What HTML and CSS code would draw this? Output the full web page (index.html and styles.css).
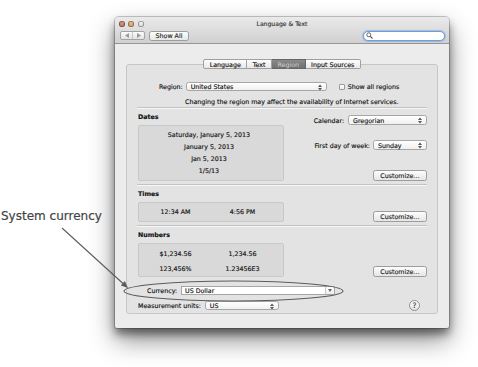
FILE: index.html
```html
<!DOCTYPE html>
<html lang="en">
<head>
  <meta charset="UTF-8" />
  <title>Language &amp; Text</title>
  <link rel="stylesheet" href="styles.css">
</head>
<body>
  <div class="stage">
    <p class="callout-label">System currency</p>
    <svg class="callout" width="478" height="367" viewBox="0 0 478 367">
      <line x1="62" y1="228" x2="123" y2="283.5" stroke="#5c5c5c" stroke-width="1.1"/>
      <polygon points="128,288 120.8,285.5 124.8,281.1" fill="#5c5c5c"/>
      <ellipse cx="233.5" cy="291" rx="109.5" ry="10" fill="none" stroke="#5c5c5c" stroke-width="1.1"/>
    </svg>

    <div class="window">
      <div class="titlebar">
        <div class="title-row">
          <div class="lights">
            <span class="light close"></span>
            <span class="light min"></span>
            <span class="light zoom"></span>
          </div>
          <div class="title">Language &amp; Text</div>
          <div></div>
        </div>
        <div class="toolbar">
          <div class="nav">
            <span class="nav-btn">
              <svg width="4" height="5" viewBox="0 0 4 5"><path d="M4 0L0 2.5L4 5Z" fill="#9a9a9a"/></svg>
            </span>
            <span class="nav-btn">
              <svg width="4" height="5" viewBox="0 0 4 5"><path d="M0 0L4 2.5L0 5Z" fill="#9a9a9a"/></svg>
            </span>
          </div>
          <div class="btn show-all">Show All</div>
          <div class="search">
            <svg width="7" height="7" viewBox="0 0 7 7"><circle cx="2.8" cy="2.8" r="2" fill="none" stroke="#555" stroke-width="0.9"/><path d="M4.3 4.3L6.5 6.5" stroke="#555" stroke-width="1.1"/></svg>
          </div>
        </div>
      </div>

      <div class="content">
        <div class="tabs">
          <span class="tab">Language</span>
          <span class="tab">Text</span>
          <span class="tab selected">Region</span>
          <span class="tab">Input Sources</span>
        </div>

        <div class="group">
          <div class="region-row">
            <span>Region:</span>
            <div class="popup region-popup">United States<svg class="updown" width="4" height="7" viewBox="0 0 4 7"><path d="M0 3L2 0.5L4 3Z M0 4L2 6.5L4 4Z"/></svg></div>
            <span class="checkbox"></span>
            <span>Show all regions</span>
          </div>
          <p class="info">Changing the region may affect the availability of Internet services.</p>
          <div class="separator"></div>

          <div class="section">
            <div class="section-left">
              <div class="section-title">Dates</div>
              <div class="inset dates">
                <div>Saturday, January 5, 2013</div>
                <div>January 5, 2013</div>
                <div>Jan 5, 2013</div>
                <div>1/5/13</div>
              </div>
            </div>
            <div class="section-right">
              <div class="field calendar">
                <span>Calendar:</span>
                <div class="popup cal-popup">Gregorian<svg class="updown" width="4" height="7" viewBox="0 0 4 7"><path d="M0 3L2 0.5L4 3Z M0 4L2 6.5L4 4Z"/></svg></div>
              </div>
              <div class="field first-day">
                <span>First day of week:</span>
                <div class="popup day-popup">Sunday<svg class="updown" width="4" height="7" viewBox="0 0 4 7"><path d="M0 3L2 0.5L4 3Z M0 4L2 6.5L4 4Z"/></svg></div>
              </div>
              <div class="btn customize">Customize…</div>
            </div>
          </div>
          <div class="separator sep-mid"></div>

          <div class="section">
            <div class="section-left">
              <div class="section-title">Times</div>
              <div class="inset pairs times">
                <span>12:34 AM</span><span>4:56 PM</span>
              </div>
            </div>
            <div class="section-right">
              <div class="btn customize">Customize…</div>
            </div>
          </div>
          <div class="separator sep-mid"></div>

          <div class="section numbers-section">
            <div class="section-left">
              <div class="section-title">Numbers</div>
              <div class="inset pairs numbers">
                <span>$1,234.56</span><span>1,234.56</span>
                <span>123,456%</span><span>1.23456E3</span>
              </div>
            </div>
            <div class="section-right">
              <div class="btn customize">Customize…</div>
            </div>
          </div>

          <div class="currency-row">
            <span>Currency:</span>
            <div class="combo">
              <span class="combo-text">US Dollar</span>
              <span class="combo-btn"><svg width="4" height="3" viewBox="0 0 4 3"><path d="M0 0L4 0L2 3Z" fill="#666"/></svg></span>
            </div>
          </div>
          <div class="units-row">
            <span>Measurement units:</span>
            <div class="popup units-popup">US<svg class="updown" width="4" height="7" viewBox="0 0 4 7"><path d="M0 3L2 0.5L4 3Z M0 4L2 6.5L4 4Z"/></svg></div>
            <span class="help">?</span>
          </div>
        </div>
      </div>
    </div>
  </div>
</body>
</html>
```

FILE: styles.css
```css
body {
  margin: 0;
  background: #fff;
  font-family: "DejaVu Sans", Verdana, sans-serif;
  font-size: 6.3px;
  color: #111;
  -webkit-text-stroke: 0.15px currentColor;
}
.stage {
  position: relative;
  width: 478px;
  height: 367px;
  overflow: hidden;
  padding-top: 17px;
  box-sizing: border-box;
}
.callout-label {
  position: absolute;
  left: 1px;
  top: 209px;
  margin: 0;
  font-size: 12px;
  color: #444;
  -webkit-text-stroke: 0.2px currentColor;
}
.callout {
  position: absolute;
  left: 0;
  top: 0;
  z-index: 2;
  pointer-events: none;
}

/* window */
.window {
  margin-left: 115px;
  width: 334px;
  height: 311px;
  background: #ececec;
  border-radius: 4px 4px 2px 2px;
  box-shadow: 0 0 0 1px rgba(0,0,0,.2), 0 6px 8px rgba(0,0,0,.45), 0 12px 26px rgba(0,0,0,.45);
  overflow: hidden;
}
.titlebar {
  height: 26px;
  background: linear-gradient(#eaeaea, #d0d0d0);
  border-bottom: 1px solid #959595;
}
.title-row {
  display: grid;
  grid-template-columns: 1fr auto 1fr;
  align-items: center;
  height: 12px;
}
.lights {
  display: flex;
  gap: 3.5px;
  padding-left: 3.5px;
  padding-top: 1px;
}
.light {
  width: 6px;
  height: 6px;
  border-radius: 50%;
  box-shadow: inset 0 0 0 0.6px rgba(0,0,0,.4);
}
.light.close { background: radial-gradient(circle at 50% 40%, #d99b86, #9c5a46); }
.light.min { background: radial-gradient(circle at 50% 40%, #e8be8c, #b9834a); }
.light.zoom { background: radial-gradient(circle at 50% 40%, #f0f0f0, #c2c2c2); }
.title {
  color: #333;
  font-size: 6.1px;
  padding-top: 1px;
}
.toolbar {
  display: flex;
  align-items: center;
  height: 11px;
  margin-top: 1px;
  padding: 0 4px 0 5px;
}
.nav {
  display: flex;
  width: 25px;
  height: 9px;
  border: 1px solid #a3a3a3;
  border-radius: 2px;
  background: linear-gradient(#fbfbfb, #e2e2e2);
  box-sizing: border-box;
}
.nav-btn {
  flex: 1;
  display: flex;
  align-items: center;
  justify-content: center;
}
.nav-btn + .nav-btn {
  border-left: 1px solid #c4c4c4;
}
.btn {
  display: flex;
  align-items: center;
  justify-content: center;
  border: 1px solid #9d9d9d;
  border-radius: 2.5px;
  background: linear-gradient(#fdfdfd, #e6e6e6);
  box-sizing: border-box;
  color: #222;
}
.show-all {
  margin-left: 4px;
  width: 40px;
  height: 10px;
}
.search {
  margin-left: auto;
  width: 82px;
  height: 10px;
  border: 1px solid #6f9fd6;
  border-radius: 6px;
  background: #fff;
  box-shadow: 0 0 0 1px rgba(120,165,220,.55);
  box-sizing: border-box;
  display: flex;
  align-items: center;
  padding-left: 2px;
}

/* content */
.content {
  padding: 15px 11px 0;
}
.tabs {
  position: relative;
  z-index: 1;
  display: flex;
  justify-content: center;
  height: 10px;
}
.tab {
  display: flex;
  align-items: center;
  padding: 0 5.5px;
  border: 1px solid #9f9f9f;
  border-left: none;
  background: linear-gradient(#fdfdfd, #e8e8e8);
}
.tab:first-child {
  border-left: 1px solid #9f9f9f;
  border-radius: 2px 0 0 2px;
}
.tab:last-child {
  border-radius: 0 2px 2px 0;
}
.tab.selected {
  background: linear-gradient(#8a8a8a, #6f6f6f);
  color: #d2d2d2;
  border-color: #666;
  -webkit-text-stroke: 0;
}
.group {
  margin-top: -5px;
  height: 250px;
  box-sizing: border-box;
  border: 1px solid #c6c6c6;
  border-radius: 3px;
  background: #e3e3e3;
  padding: 0 10px 0 11px;
}
.region-row {
  display: flex;
  align-items: center;
  height: 9px;
  margin-top: 17px;
  margin-left: 21px;
}
.popup {
  position: relative;
  display: flex;
  align-items: center;
  height: 9px;
  padding-left: 4px;
  border: 1px solid #a6a6a6;
  border-radius: 2.5px;
  background: linear-gradient(#ffffff, #f0f0f0);
  box-sizing: border-box;
}
.updown {
  position: absolute;
  right: 4px;
  top: 0.5px;
  fill: #555;
}
.region-popup {
  width: 141px;
  margin-left: 3px;
}
.checkbox {
  width: 6px;
  height: 6px;
  margin: 0 3px 0 12px;
  border: 1px solid #9a9a9a;
  border-radius: 1px;
  background: linear-gradient(#fff, #ececec);
  box-sizing: border-box;
}
.info {
  margin: 6px 0 0 47px;
  line-height: 10px;
}
.separator {
  height: 1px;
  border-bottom: 1px solid #f7f7f7;
  background: #c2c2c2;
  margin-left: -1px;
}
.sep-mid {
  margin-top: 3px;
}
.section {
  display: flex;
  justify-content: space-between;
}
.section-left {
  width: 146px;
}
.section-title {
  font-weight: bold;
  line-height: 10px;
  margin-top: 3px;
}
.inset {
  margin-top: 3px;
  border: 1px solid #c8c8c8;
  border-radius: 2px;
  background: #d9d9d9;
  box-sizing: border-box;
}
.dates {
  height: 56px;
  padding: 3px 4px 0 0;
  text-align: center;
  line-height: 12px;
}
.pairs {
  display: grid;
  grid-template-columns: 1fr 1fr;
  padding: 0 7px 0 3px;
  text-align: center;
}
.times {
  height: 20px;
  line-height: 18px;
}
.numbers {
  height: 34px;
  padding-top: 3px;
  line-height: 14px;
}
.section-right {
  display: flex;
  flex-direction: column;
  align-items: flex-end;
}
.field {
  display: flex;
  align-items: center;
  gap: 4px;
}
.calendar {
  margin-top: 6px;
}
.cal-popup {
  width: 79px;
  height: 10px;
}
.first-day {
  margin-top: 15px;
  gap: 3px;
}
.day-popup {
  width: 54px;
  height: 10px;
}
.customize {
  margin-top: auto;
  width: 54px;
  height: 11px;
}
.currency-row {
  display: flex;
  align-items: center;
  margin: 9px 0 0 9px;
  height: 9px;
}
.combo {
  display: flex;
  width: 154px;
  height: 9px;
  margin-left: 4px;
  border: 1px solid #a6a6a6;
  background: #fff;
  box-sizing: border-box;
}
.combo-text {
  flex: 1;
  padding-left: 3px;
  display: flex;
  align-items: center;
}
.combo-btn {
  width: 8px;
  border-left: 1px solid #c9c9c9;
  background: linear-gradient(#fff, #eee);
  display: flex;
  align-items: center;
  justify-content: center;
}
.units-row {
  display: flex;
  align-items: center;
  margin-top: 6px;
  height: 9px;
}
.units-popup {
  width: 74px;
  margin-left: 4px;
}
.help {
  margin-left: auto;
  margin-right: 7px;
  width: 11px;
  height: 11px;
  border-radius: 50%;
  border: 1px solid #8f8f8f;
  background: linear-gradient(#fff, #e2e2e2);
  box-sizing: border-box;
  display: flex;
  align-items: center;
  justify-content: center;
  font-size: 7.5px;
  color: #444;
}
```
